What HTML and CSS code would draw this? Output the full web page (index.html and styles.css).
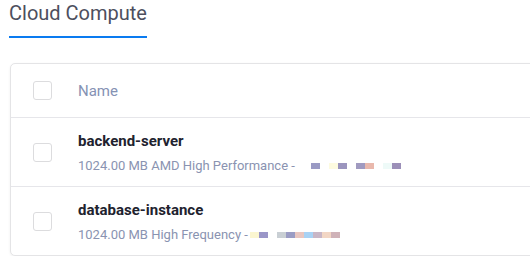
FILE: index.html
```html
<!DOCTYPE html>
<html lang="en">
<head>
    <meta charset="UTF-8">
    <meta name="viewport" content="width=device-width, initial-scale=1.0">
    <title>Cloud Compute</title>
    <link rel="stylesheet" href="styles.css">
</head>
<body>
    <div class="tabs">
        <div class="tab active">Cloud Compute</div>
    </div>

    <div class="card">
        <div class="row head">
            <span class="check"></span>
            <span class="col-name">Name</span>
        </div>
        <div class="row">
            <span class="check"></span>
            <div class="info">
                <div class="title">backend-server</div>
                <div class="sub">1024.00 MB AMD High Performance -
                    <span class="blur wide">
                        <i style="background:#9a9ac4"></i><i style="background:#fff"></i><i style="background:#fdfbe0"></i><i style="background:#9b95be"></i><i style="background:#fff"></i><i style="background:#a09ac0"></i><i style="background:#e9b8ac"></i><i style="background:#fff"></i><i style="background:#eefaf8"></i><i style="background:#9b8fb8"></i>
                    </span>
                </div>
            </div>
        </div>
        <div class="row last">
            <span class="check"></span>
            <div class="info">
                <div class="title">database-instance</div>
                <div class="sub">1024.00 MB High Frequency -<span class="blur">
                        <i style="background:#fbf6d0"></i><i style="background:#9a96c8"></i><i style="background:#fff"></i><i style="background:#c9cfd4"></i><i style="background:#9a9cc4"></i><i style="background:#e8c6c0"></i><i style="background:#a8d2f4"></i><i style="background:#c8b6c6"></i><i style="background:#f2d6c4"></i><i style="background:#cfb2b8"></i>
                    </span>
                </div>
            </div>
        </div>
    </div>
</body>
</html>
```

FILE: styles.css
```css
body {
    margin: 0;
    padding: 0;
    background-color: #fff;
    font-family: Roboto, "Noto Sans", sans-serif;
    overflow: hidden;
}

.tabs {
    display: flex;
    padding-left: 9px;
    height: 40px;
}

.tab {
    font-size: 20px;
    color: #4d4f5e;
    line-height: 26px;
    border-bottom: 2px solid #0a7bf0;
    height: 36px;
    width: 138px;
}

.card {
    margin: 23px 0 0 10px;
    width: 560px;
    border: 1px solid #e4e4e6;
    border-radius: 5px;
    box-shadow: 0 1px 3px rgba(0, 0, 0, 0.06);
    background: #fff;
}

.row {
    display: flex;
    align-items: center;
    height: 68px;
    border-bottom: 1px solid #e6e6ea;
}

.row.head {
    height: 53px;
}

.row.last {
    border-bottom: none;
}

.check {
    width: 17px;
    height: 17px;
    border: 1px solid #dcdcde;
    border-radius: 3px;
    margin: 0 26px 0 22px;
    flex-shrink: 0;
}

.col-name {
    font-size: 15px;
    color: #8592b4;
}

.title {
    font-size: 15px;
    font-weight: bold;
    color: #21222e;
    margin-bottom: 8px;
}

.sub {
    font-size: 13px;
    color: #8a93b1;
}

.blur {
    display: inline-flex;
    vertical-align: middle;
    margin-left: 2px;
}

.blur.wide {
    margin-left: 13px;
}

.blur i {
    display: block;
    width: 9px;
    height: 6px;
}
```
